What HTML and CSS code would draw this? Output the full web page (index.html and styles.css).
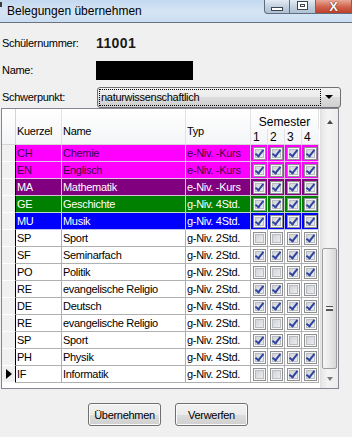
FILE: index.html
```html
<!DOCTYPE html>
<html lang="de">
<head>
  <meta charset="UTF-8">
  <title>Belegungen übernehmen</title>
  <link rel="stylesheet" href="styles.css">
</head>
<body>

<div class="titlebar">
  <span class="app-icon"></span>
  <span class="title">Belegungen übernehmen</span>
  <div class="caption-btns">
    <span class="cap min"><i></i></span>
    <span class="cap max"><i></i></span>
    <span class="cap close">X</span>
  </div>
</div>

<div class="form">
  <div class="field">
    <label>Schülernummer:</label>
    <b class="number">11001</b>
  </div>
  <div class="field">
    <label>Name:</label>
    <span class="redacted"></span>
  </div>
  <div class="field">
    <label>Schwerpunkt:</label>
    <div class="combo">
      <span class="combo-text">naturwissenschaftlich</span>
      <span class="combo-arrow"></span>
    </div>
  </div>
</div>

<div class="grid">
  <div class="table">
    <div class="grid-head">
      <div class="hcell rowhead"></div>
      <div class="hcell span2">Kuerzel</div>
      <div class="hcell span2">Name</div>
      <div class="hcell span2">Typ</div>
      <div class="hcell semester">Semester</div>
      <div class="hcell num">1</div>
      <div class="hcell num">2</div>
      <div class="hcell num">3</div>
      <div class="hcell num last">4</div>
    </div>
    <div class="rows" id="rows"></div>
  </div>
  <div class="vscroll">
    <div class="sb-btn up"><span class="arrow-up"></span></div>
    <div class="sb-track"></div>
    <div class="sb-thumb"><span class="grip"></span></div>
    <div class="sb-btn down"><span class="arrow-down"></span></div>
  </div>
</div>

<div class="actions">
  <button>Übernehmen</button>
  <button>Verwerfen</button>
</div>

<script>
const courses = [
  ['CH', 'Chemie', 'e-Niv. -Kurs', [1,1,1,1], 'pink'],
  ['EN', 'Englisch', 'e-Niv. -Kurs', [1,1,1,1], 'pink'],
  ['MA', 'Mathematik', 'e-Niv. -Kurs', [1,1,1,1], 'purple'],
  ['GE', 'Geschichte', 'g-Niv. 4Std.', [1,1,1,1], 'green'],
  ['MU', 'Musik', 'g-Niv. 4Std.', [1,1,1,1], 'blue'],
  ['SP', 'Sport', 'g-Niv. 2Std.', [0,0,1,1], ''],
  ['SF', 'Seminarfach', 'g-Niv. 2Std.', [1,1,1,1], ''],
  ['PO', 'Politik', 'g-Niv. 2Std.', [0,0,1,1], ''],
  ['RE', 'evangelische Religio', 'g-Niv. 2Std.', [1,1,0,0], ''],
  ['DE', 'Deutsch', 'g-Niv. 4Std.', [1,1,1,1], ''],
  ['RE', 'evangelische Religio', 'g-Niv. 2Std.', [0,0,1,1], ''],
  ['SP', 'Sport', 'g-Niv. 2Std.', [1,1,0,0], ''],
  ['PH', 'Physik', 'g-Niv. 4Std.', [1,1,1,1], ''],
  ['IF', 'Informatik', 'g-Niv. 2Std.', [0,0,1,1], '']
];

const rows = document.getElementById('rows');

courses.forEach((c, i) => {
  const row = document.createElement('div');
  row.className = 'row ' + c[4];
  const current = i === courses.length - 1 ? '<span class="current"></span>' : '';
  let html = `<div class="cell rowhead">${current}</div>
    <div class="cell">${c[0]}</div>
    <div class="cell">${c[1]}</div>
    <div class="cell">${c[2]}</div>`;
  c[3].forEach(on => {
    html += `<div class="cell check"><span class="cb${on ? ' on' : ''}"></span></div>`;
  });
  row.innerHTML = html;
  rows.appendChild(row);
});
</script>

</body>
</html>
```

FILE: styles.css
```css
* { margin: 0; padding: 0; box-sizing: border-box; }

body {
  width: 352px;
  height: 437px;
  overflow: hidden;
  background: #f0f0f0;
  font-family: 'Liberation Sans', Arial, sans-serif;
  font-size: 11px;
  letter-spacing: -0.3px;
  color: #000;
}

/* window title bar */
.titlebar {
  height: 23px;
  display: flex;
  align-items: flex-start;
  background: linear-gradient(#c4d8ef, #d6e5f5 55%, #cadcf0);
  border-bottom: 1px solid #6a7480;
}

.app-icon {
  width: 2px;
  height: 5px;
  margin-top: 2px;
  background: #3a3a3a;
}

.title {
  font-size: 12px;
  letter-spacing: 0;
  line-height: 16px;
  margin: 3px 0 0 5px;
}

.caption-btns {
  margin-left: auto;
  display: flex;
  height: 14px;
}

.cap {
  height: 14px;
  border: 1px solid #5f6d80;
  border-top: none;
  background: linear-gradient(#e4ecf5, #c3d1e0 50%, #afc0d4);
  display: flex;
  align-items: center;
  justify-content: center;
}

.cap.min {
  width: 26px;
  border-radius: 0 0 0 4px;
}

.cap.min i {
  width: 12px;
  height: 4px;
  margin-top: 5px;
  border: 1px solid #3c4450;
  background: #fff;
}

.cap.max {
  width: 26px;
  border-left: none;
}

.cap.max i {
  width: 11px;
  height: 9px;
  margin-top: -2px;
  border: 1px solid #3c4450;
  background: #fff;
  box-shadow: inset 0 0 0 2px #fff, inset 0 0 0 3px #3c4450;
}

.cap.close {
  width: 36px;
  border-left: none;
  background: linear-gradient(#e9a898, #d06650 50%, #bd3e26);
  color: #fff;
  font-weight: bold;
  font-size: 13px;
  line-height: 10px;
  padding-top: 1px;
  text-shadow: 0 0 1px #5a1a10, 0 0 1px #5a1a10;
}

/* header fields */
.form {
  padding: 10px 0 0 2px;
  display: flex;
  flex-direction: column;
  gap: 7px;
}

.field {
  display: flex;
  align-items: center;
  height: 20px;
}

.field label {
  width: 94px;
}

.number {
  font-size: 14px;
  letter-spacing: 0.4px;
  color: #1a1a1a;
}

.redacted {
  width: 97px;
  height: 19px;
  background: #000;
}

.combo {
  width: 244px;
  height: 21px;
  margin-left: 1px;
  border: 1px solid #707070;
  border-radius: 3px;
  background: linear-gradient(#f2f2f2, #ebebeb 50%, #dddddd 50%, #cfcfcf);
  display: flex;
  align-items: center;
  padding: 0 2px 0 1px;
}

.combo-text {
  width: 222px;
  height: 17px;
  line-height: 15px;
  border: 1px dotted #000;
  padding-left: 1px;
}

.combo-arrow {
  margin-left: auto;
  margin-right: 5px;
  width: 0;
  height: 0;
  border-left: 4px solid transparent;
  border-right: 4px solid transparent;
  border-top: 4px solid #000;
}

/* data grid */
.grid {
  margin: 1px 0 0 1px;
  width: 338px;
  height: 281px;
  border: 1px solid #828790;
  background: #fff;
  display: flex;
}

.table {
  width: 317px;
}

.grid-head,
.row {
  display: grid;
  grid-template-columns: 14px 46px 124px 65px 17px 17px 17px 17px;
}

.grid-head {
  grid-template-rows: 20px 15px;
  height: 36px;
  background: linear-gradient(#ffffff, #f4f5f7);
  border-bottom: 1px solid #d5d5d5;
}

.hcell {
  border-right: 1px solid #e2e3e5;
  padding-left: 1px;
  white-space: nowrap;
}

.hcell.rowhead {
  grid-row: span 2;
  border-right-color: #d5d5d5;
}

.hcell.span2 {
  grid-row: span 2;
  display: flex;
  align-items: center;
  padding-top: 8px;
}

.hcell.semester {
  grid-column: span 4;
  display: flex;
  align-items: flex-end;
  justify-content: center;
  font-size: 12px;
  letter-spacing: 0;
  line-height: 14px;
  padding: 0;
}

.hcell.num {
  font-size: 12px;
  letter-spacing: 0;
  line-height: 14px;
  padding: 1px 0 0 2px;
}

.hcell.last {
  border-right: none;
}

.row {
  height: 17px;
}

.cell {
  border-right: 1px solid #b0b0b0;
  border-bottom: 1px solid #b0b0b0;
  line-height: 16px;
  padding-left: 1px;
  white-space: nowrap;
  overflow: hidden;
}

.cell.rowhead {
  background: #f0f0f0;
  border-right: 1px solid #000;
  border-bottom-color: #fff;
  display: flex;
  align-items: center;
  padding-left: 4px;
}

.current {
  width: 0;
  height: 0;
  border-top: 5px solid transparent;
  border-bottom: 5px solid transparent;
  border-left: 6px solid #000;
}

.row.pink .cell:not(.rowhead) { background: #ff00ff; color: #3c0048; border-color: #e4c4e8; }
.row.purple .cell:not(.rowhead) { background: #800080; color: #fff; border-color: #d8c0d8; }
.row.green .cell:not(.rowhead) { background: #008000; color: #fff; border-color: #c0d8c0; }
.row.blue .cell:not(.rowhead) { background: #0000ff; color: #fff; border-color: #c0c0e8; }

.cell.check {
  display: flex;
  align-items: center;
  justify-content: center;
  padding: 0;
}

.cb {
  position: relative;
  width: 13px;
  height: 13px;
  border: 1px solid #8e8f8f;
  background: linear-gradient(135deg, #c8ccd2, #f4f4f4);
  box-shadow: inset 0 0 0 1px #f6f6f6, inset 0 0 0 2px #b9bdc3;
}

.cb.on::after {
  content: "";
  position: absolute;
  left: 3px;
  top: 0;
  width: 3px;
  height: 7px;
  border: solid #2e44a0;
  border-width: 0 2px 2px 0;
  transform: rotate(38deg);
}

/* vertical scrollbar */
.vscroll {
  margin-left: 1px;
  width: 18px;
  display: flex;
  flex-direction: column;
  background: linear-gradient(90deg, #e6e6e6, #f4f4f4 40%, #ececec);
  border-left: 1px solid #e0e0e0;
}

.sb-btn {
  display: flex;
  justify-content: center;
  align-items: center;
}

.sb-btn.up { height: 26px; }
.sb-btn.down { height: 18px; }

.sb-track { height: 113px; }

.arrow-up,
.arrow-down {
  width: 0;
  height: 0;
  border-left: 3.5px solid transparent;
  border-right: 3.5px solid transparent;
}

.arrow-up { border-bottom: 4px solid #4a4a4a; }
.arrow-down { border-top: 4px solid #7a7a7a; }

.sb-thumb {
  height: 121px;
  margin: 0 1px 1px 1px;
  border: 1px solid #9d9d9d;
  border-radius: 2px;
  background: linear-gradient(90deg, #f6f6f6, #e9e9e9 50%, #d6d6d6);
  display: flex;
  align-items: center;
  justify-content: center;
}

.grip {
  width: 7px;
  height: 5px;
  border-top: 1px solid #555;
  border-bottom: 1px solid #555;
  background: linear-gradient(#fff 0, #fff 1px, #555 1px, #555 2px, transparent 2px);
  background-position: 0 1px;
  background-repeat: no-repeat;
}

/* buttons */
.actions {
  display: flex;
  gap: 14px;
  padding-left: 88px;
  margin-top: 14px;
}

.actions button {
  width: 73px;
  height: 23px;
  font-family: 'Liberation Sans', Arial, sans-serif;
  font-size: 11px;
  letter-spacing: -0.3px;
  color: #000;
  border: 1px solid #707070;
  border-radius: 3px;
  background: linear-gradient(#f2f2f2, #ebebeb 50%, #dddddd 50%, #cfcfcf);
  box-shadow: inset 0 0 0 1px #fbfbfb;
}
```
